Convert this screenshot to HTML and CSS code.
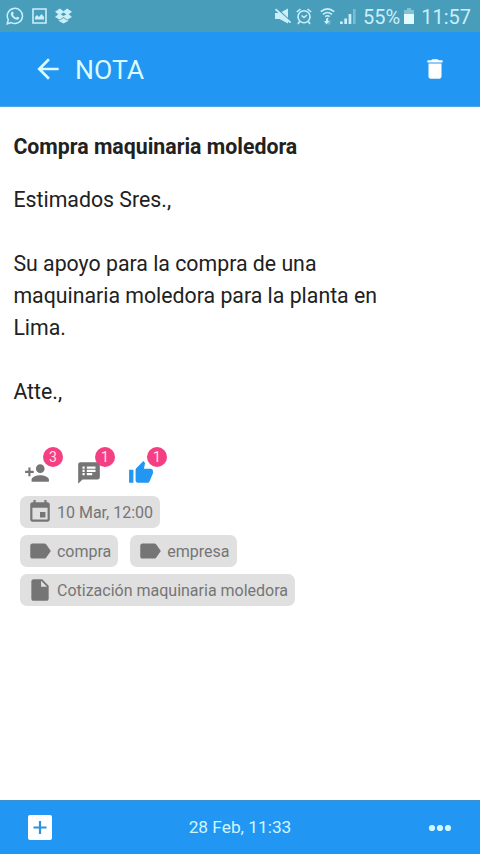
FILE: index.html
```html
<!DOCTYPE html>
<html lang="es">
<head>
<meta charset="utf-8">
<title>Nota</title>
<link rel="stylesheet" href="styles.css">
</head>
<body>
<div class="screen">
  <div class="status">
    <div class="status-left">
      <svg width="18" height="18" viewBox="0 0 18 18"><path d="M1.2 16.8l1.1-4.1a7.6 7.6 0 1 1 3 2.9z" fill="none" stroke="currentColor" stroke-width="1.5"/><path d="M5.7 4.9c.6-.5 1.2-.4 1.5.3l.5 1.2c.1.5-.5 1-.7 1.3.8 1.5 1.7 2.300 3.200 3 .4-.4.8-1.100 1.300-.9l1.500.8c.5.3.2 1-.2 1.500-1.100 1.200-2.800.8-4.400-.1C6.700 11 5.200 9.400 4.800 7.600c-.2-1.100.2-2.100.9-2.700z" fill="currentColor"/></svg>
      <svg width="15" height="16" viewBox="0 0 15 16"><path d="M1 1h13v14H1z" fill="none" stroke="currentColor" stroke-width="1.600"/><path d="M3 11.500V9l2-2 2 2 2.500-3L12 9v2.500z" fill="currentColor"/></svg>
      <svg width="17" height="16" viewBox="0 0 18 16"><path d="M5.200 0L9 2.900 12.800 0 18 3.400 14.500 6.200 18 9l-5.200 3.100L9 9l-3.800 3.100L0 9l3.500-2.800L0 3.400z" fill="currentColor"/><path d="M9 4.200l3 2-3 1.900-3-1.900z" class="box-gap"/><path d="M4 12l1.200.8L9 10l3.800 2.800L14 12v1.300L9 16l-5-2.700z" fill="currentColor"/></svg>
    </div>
    <div class="status-right">
      <svg class="mute" width="16" height="16" viewBox="0 0 16 16"><path d="M0 5h4.500L13 .5v15L4.500 11H0z" fill="currentColor"/><path d="M1.500 .2l14 13" class="slash-gap"/><path d="M.5 1.300l15 13.200" fill="none" stroke="currentColor" stroke-width="1.800"/></svg>
      <svg class="alarm" width="16" height="17" viewBox="0 0 16 17"><g fill="none" stroke="currentColor" stroke-width="1.600"><circle cx="8" cy="8.800" r="6"/><path d="M.8 4L4.500 1M11.500 1l3.700 3M3.500 13.500L2 16M12.500 13.500L14 16M5.500 7.500L8 9.500l3-2.500"/></g></svg>
      <svg class="wifi" width="15" height="18" viewBox="0 0 15 18"><g fill="none" stroke="currentColor" stroke-width="1.600"><path d="M.8 4.600Q7.500-1 14.200 4.600M3 7.300q4.500-3.600 9 0M5.200 9.700q2.300-1.900 4.600 0"/></g><path d="M7.500 10.500l1.500 1.500H6zM4 14h2v-2h2v2h1.500L6.500 17.500z" fill="currentColor"/><path d="M8 17.500V13h2.500v4.500z" fill="currentColor" opacity=".3"/></svg>
      <svg class="signal" width="16" height="16" viewBox="0 0 16 16"><path d="M0 13.500h2.800V16H0zM4.300 10.500H7V16H4.300zM8.600 6h2.700v10H8.600z" fill="currentColor"/><path d="M13 1h2.600v15H13z" fill="currentColor" opacity=".4"/></svg>
      <span class="percent">55%</span>
      <svg class="battery" width="10" height="16" viewBox="0 0 10 16"><path d="M3 0h4v2h3v14H0V2h3z" fill="currentColor" opacity=".45"/><path d="M0 6h10v10H0z" fill="#e3faff"/></svg>
      <span class="clock">11:57</span>
    </div>
  </div>

  <header class="appbar">
    <svg class="back" width="32" height="32" viewBox="0 0 24 24"><path d="M20 11H7.830l5.590-5.590L12 4l-8 8 8 8 1.410-1.410L7.830 13H20v-2z" fill="currentColor"/></svg>
    <h1>NOTA</h1>
    <svg class="trash" width="26" height="26" viewBox="0 0 24 24"><path d="M6 19c0 1.100.9 2 2 2h8c1.100 0 2-.9 2-2V7H6v12zM19 4h-3.500l-1-1h-5l-1 1H5v2h14V4z" fill="#fff"/></svg>
  </header>

  <main>
    <h2>Compra maquinaria moledora</h2>
    <div class="note">
      <p>Estimados Sres.,</p>
      <p>Su apoyo para la compra de una<br>maquinaria moledora para la planta en<br>Lima.</p>
      <p>Atte.,</p>
    </div>

    <div class="actions">
      <div class="action">
        <svg width="26" height="26" viewBox="0 0 24 24"><path d="M15 12c2.210 0 4-1.790 4-4s-1.790-4-4-4-4 1.790-4 4 1.790 4 4 4zm-9-2V7H4v3H1v2h3v3h2v-3h3v-2H6zm9 4c-2.670 0-8 1.340-8 4v2h16v-2c0-2.660-5.330-4-8-4z" fill="currentColor"/></svg>
        <span class="badge">3</span>
      </div>
      <div class="action">
        <svg width="26" height="26" viewBox="0 0 24 24"><path d="M20 2H4c-1.100 0-1.990.9-1.990 2L2 22l4-4h14c1.100 0 2-.9 2-2V4c0-1.100-.9-2-2-2zM8 14H6v-2h2v2zm0-3H6V9h2v2zm0-3H6V6h2v2zm7 6h-5v-2h5v2zm3-3h-8V9h8v2zm0-3h-8V6h8v2z" fill="currentColor"/></svg>
        <span class="badge">1</span>
      </div>
      <div class="action liked">
        <svg width="26" height="26" viewBox="0 0 24 24"><path d="M1 21h4V9H1v12zm22-11c0-1.100-.9-2-2-2h-6.310l.95-4.570.03-.32c0-.41-.17-.79-.44-1.060L14.170 1 7.590 7.590C7.220 7.950 7 8.450 7 9v10c0 1.100.9 2 2 2h9c.83 0 1.540-.5 1.840-1.220l3.020-7.050c.09-.23.14-.47.14-.73v-2z" fill="currentColor"/></svg>
        <span class="badge">1</span>
      </div>
    </div>

    <div class="chips">
      <div class="chip-row">
        <span class="chip"><svg width="26" height="26" viewBox="0 0 24 24"><path d="M17 12h-5v5h5v-5zM16 1v2H8V1H6v2H5c-1.110 0-1.990.9-1.990 2L3 19c0 1.100.89 2 2 2h14c1.100 0 2-.9 2-2V5c0-1.100-.9-2-2-2h-1V1h-2zm3 18H5V8h14v11z" fill="currentColor"/></svg>10 Mar, 12:00</span>
      </div>
      <div class="chip-row">
        <span class="chip"><svg width="26" height="26" viewBox="0 0 24 24"><path d="M17.630 5.840C17.270 5.330 16.670 5 16 5L5 5.010C3.900 5.010 3 5.900 3 7v10c0 1.100.9 1.990 2 1.990L16 19c.67 0 1.270-.33 1.630-.84L22 12l-4.370-6.160z" fill="currentColor"/></svg>compra</span>
        <span class="chip"><svg width="26" height="26" viewBox="0 0 24 24"><path d="M17.630 5.840C17.270 5.330 16.670 5 16 5L5 5.010C3.900 5.010 3 5.900 3 7v10c0 1.100.9 1.990 2 1.990L16 19c.67 0 1.270-.33 1.630-.84L22 12l-4.370-6.160z" fill="currentColor"/></svg>empresa</span>
      </div>
      <div class="chip-row">
        <span class="chip"><svg width="26" height="26" viewBox="0 0 24 24"><path d="M6 2c-1.100 0-1.990.9-1.990 2L4 20c0 1.100.89 2 1.990 2H18c1.100 0 2-.9 2-2V8l-6-6H6zm7 7V3.500L18.500 9H13z" fill="currentColor"/></svg>Cotización maquinaria moledora</span>
      </div>
    </div>
  </main>

  <footer class="bottombar">
    <svg class="add" width="24" height="25" viewBox="0 0 24 25"><rect width="24" height="25" rx="2" fill="#fff"/><path d="M12 6v13M5.500 12.500h13" stroke="#2f92dd" stroke-width="2.200"/></svg>
    <span class="date">28 Feb, 11:33</span>
    <svg class="more" width="24" height="8" viewBox="0 0 24 8"><g fill="currentColor"><circle cx="4" cy="4" r="3.100"/><circle cx="12" cy="4" r="3.100"/><circle cx="20" cy="4" r="3.100"/></g></svg>
  </footer>
</div>
</body>
</html>
```
FILE: styles.css
```css
* { box-sizing: border-box; margin: 0; padding: 0; }
body { font-family: Roboto, "Liberation Sans", sans-serif; background: #fff; color: #212121; }
svg { display: block; flex: none; }
.screen { width: 480px; height: 854px; display: flex; flex-direction: column; overflow: hidden; }

.status { height: 32px; flex: none; display: flex; justify-content: space-between; align-items: center; background: #489dbb; color: #c9effa; padding: 0 9px 0 6px; }
.status-left { display: flex; align-items: center; gap: 8px; }
.status-right { display: flex; align-items: center; font-size: 20px; line-height: 32px; white-space: nowrap; }
.status-right span { padding-top: 1px; }
.box-gap { fill: #489dbb; }
.slash-gap { stroke: #489dbb; stroke-width: 1.5; fill: none; }
.alarm { margin-left: 5px; }
.wifi { margin-left: 8px; }
.signal { margin-left: 5px; }
.percent { margin-left: 7px; }
.battery { margin-left: 4px; }
.clock { margin-left: 7px; }

.appbar { height: 75px; flex: none; display: flex; align-items: center; background: #2196f3; color: #d8fbff; padding: 0 32px; border-bottom: 1px solid #4ba5e4; }
.appbar h1 { margin-left: 11px; padding-top: 2px; font-size: 26.6px; font-weight: 400; line-height: 32px; }
.trash { margin-left: auto; }

main { flex: 1; padding: 24px 13.4px 0; }
h2 { font-size: 21.3px; line-height: 32px; font-weight: 700; }
.note { margin-top: 21px; font-size: 21.3px; line-height: 32px; display: flex; flex-direction: column; gap: 32px; }
.actions { display: flex; gap: 26px; margin: 52px 0 0 10.6px; }
.action { position: relative; width: 26px; height: 26px; color: #757575; }
.liked { color: #2196f3; }
.badge { position: absolute; left: 19px; top: -13px; width: 20px; height: 20px; border-radius: 50%; background: #f43f82; color: #ffe0ec; font-size: 14px; line-height: 20px; text-align: center; }

.chips { margin: 10px 0 0 6.6px; display: flex; flex-direction: column; gap: 7px; }
.chip-row { display: flex; gap: 12px; }
.chip { height: 32px; display: flex; align-items: center; gap: 4px; padding: 0 7px; border-radius: 7px; background: #e0e0e0; color: #757575; font-size: 16px; white-space: nowrap; }

.bottombar { height: 54px; flex: none; display: grid; grid-template-columns: 1fr auto 1fr; align-items: center; background: #2196f3; border-top: 1px solid #3a8fcf; color: #d0f7ff; padding: 0 28px; }
.date { font-size: 17.3px; padding-bottom: 2px; }
.more { justify-self: end; }
```
